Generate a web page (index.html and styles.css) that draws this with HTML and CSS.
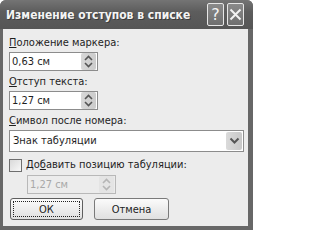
FILE: index.html
```html
<!DOCTYPE html>
<html lang="ru">
<head>
<meta charset="utf-8">
<link rel="stylesheet" href="styles.css">
</head>
<body>
<div class="window">
  <div class="titlebar">
    <span class="title">Изменение отступов в списке</span>
    <span class="tbtns">
      <span class="tbtn help">?</span>
      <span class="tbtn close">
        <svg width="13" height="13" viewBox="0 0 13 13"><path d="M1.5 1.5 L11.5 11.5 M11.5 1.5 L1.5 11.5" stroke="#f2f2f2" stroke-width="2" fill="none"/></svg>
      </span>
    </span>
  </div>
  <div class="body">
    <div class="label"><u>П</u>оложение маркера:</div>
    <div class="spin">
      <span class="val">0,63 см</span>
      <span class="spinbtn">
        <svg width="9" height="13" viewBox="0 0 9 13"><path d="M1 5 L4.5 1.5 L8 5 M1 8 L4.5 11.5 L8 8" stroke="#555" stroke-width="1.6" fill="none"/></svg>
      </span>
    </div>
    <div class="label gap"><u>О</u>тступ текста:</div>
    <div class="spin">
      <span class="val">1,27 см</span>
      <span class="spinbtn">
        <svg width="9" height="13" viewBox="0 0 9 13"><path d="M1 5 L4.5 1.5 L8 5 M1 8 L4.5 11.5 L8 8" stroke="#555" stroke-width="1.6" fill="none"/></svg>
      </span>
    </div>
    <div class="label gap"><u>С</u>имвол после номера:</div>
    <div class="select">
      <span class="val">Знак табуляции</span>
      <span class="selbtn">
        <svg width="11" height="8" viewBox="0 0 11 8"><path d="M1.5 1.5 L5.5 5.5 L9.5 1.5" stroke="#555" stroke-width="2" fill="none"/></svg>
      </span>
    </div>
    <div class="checkrow">
      <span class="checkbox"></span>
      <span class="checklabel">До<u>б</u>авить позицию табуляции:</span>
    </div>
    <div class="spin disabled">
      <span class="val">1,27 см</span>
      <span class="spinbtn">
        <svg width="9" height="13" viewBox="0 0 9 13"><path d="M1 5 L4.5 1.5 L8 5 M1 8 L4.5 11.5 L8 8" stroke="#b5b5b5" stroke-width="1.6" fill="none"/></svg>
      </span>
    </div>
    <div class="buttons">
      <span class="btn ok"><span class="focus">ОК</span></span>
      <span class="btn cancel">Отмена</span>
    </div>
  </div>
</div>
</body>
</html>
```

FILE: styles.css
```css
* { box-sizing: border-box; }
html, body { margin: 0; padding: 0; background: #ffffff; }
body { width: 253px; height: 230px; overflow: hidden; }

.window {
  width: 253px;
  height: 230px;
  background: #676767;
  border-radius: 6px 6px 0 0;
  display: flex;
  flex-direction: column;
  font-family: "DejaVu Sans Condensed", "DejaVu Sans", "Liberation Sans", sans-serif;
  color: #1e1e1e;
}

.titlebar {
  height: 29px;
  display: flex;
  align-items: center;
  justify-content: space-between;
  padding: 0 9px 0 6px;
  background: linear-gradient(#747474, #5d5d5d 40%, #555555);
  border-radius: 6px 6px 0 0;
}
.title {
  font-weight: bold;
  font-size: 12px;
  color: #f4f4f4;
  text-shadow: 1px 1px 0 #3c3c3c;
  white-space: nowrap;
}
.tbtns { display: flex; gap: 3px; }
.tbtn {
  width: 17px;
  height: 23px;
  border: 1px solid #e6e6e6;
  border-radius: 2px;
  background: linear-gradient(#8a8a8a, #6e6e6e);
  display: flex;
  align-items: center;
  justify-content: center;
  color: #f4f4f4;
}
.help { font-family: "DejaVu Sans", sans-serif; font-size: 16px; line-height: 1; }

.body {
  flex: 1;
  margin: 0 5px 4px 3px;
  background: #ececec;
  padding: 7px 6px 0 6px;
  display: flex;
  flex-direction: column;
  align-items: flex-start;
  font-size: 11px;
}

.label { line-height: 14px; height: 14px; margin-bottom: 2px; white-space: nowrap; }
.label.gap { margin-top: 4px; }

.spin {
  width: 89px;
  height: 19px;
  background: #ffffff;
  border: 1px solid #8c8c8c;
  display: flex;
  align-items: center;
  justify-content: space-between;
  padding: 1px 1px 1px 2px;
}
.val { line-height: 14px; }
.spinbtn {
  width: 15px;
  height: 17px;
  background: linear-gradient(90deg, #d8d8d8, #cbcbcb);
  border-radius: 2px;
  display: flex;
  align-items: center;
  justify-content: center;
}

.select {
  width: 235px;
  height: 22px;
  background: #ffffff;
  border: 1px solid #8c8c8c;
  display: flex;
  align-items: center;
  justify-content: space-between;
  padding: 1px 1px 1px 3px;
}
.selbtn {
  width: 16px;
  height: 18px;
  background: linear-gradient(90deg, #dadada, #c8c8c8);
  border-radius: 2px;
  display: flex;
  align-items: center;
  justify-content: center;
}

.checkrow {
  display: flex;
  align-items: center;
  gap: 4px;
  margin-top: 6px;
  height: 14px;
}
.checkbox {
  width: 13px;
  height: 13px;
  border: 1px solid #6e6e6e;
  background: linear-gradient(135deg, #d9d9d9, #f8f8f8);
}
.checklabel { white-space: nowrap; line-height: 14px; }

.spin.disabled {
  margin-top: 3px;
  margin-left: 18px;
  background: #ececec;
  border-color: #b8b8b8;
  color: #a8a8a8;
}
.spin.disabled .spinbtn { background: #e4e4e4; }

.buttons {
  display: flex;
  gap: 11px;
  margin-top: 4px;
  margin-left: 1px;
}
.btn {
  height: 22px;
  border: 1px solid #5e5e5e;
  border-radius: 3px;
  background: linear-gradient(#fbfbfb, #ededed 50%, #e0e0e0);
  display: flex;
  align-items: center;
  justify-content: center;
  font-size: 11px;
}
.ok { width: 73px; padding: 2px; }
.focus {
  width: 100%;
  height: 100%;
  border: 1px dotted #222;
  display: flex;
  align-items: center;
  justify-content: center;
}
.cancel { width: 75px; border-color: #7a7a7a; }
```
